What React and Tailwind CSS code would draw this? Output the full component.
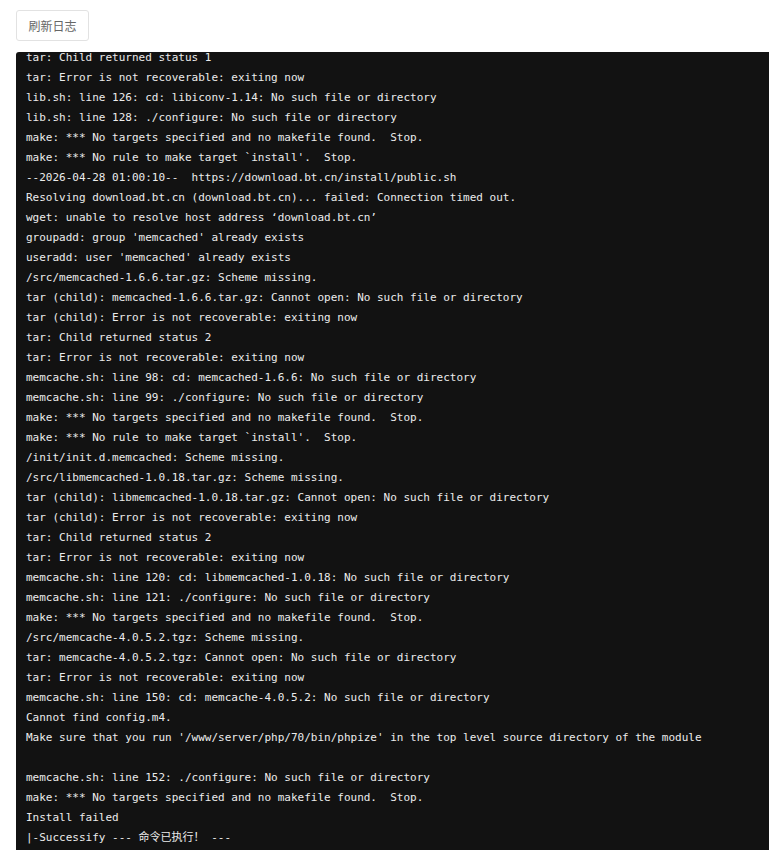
import React from "react";

const lines = [
  "tar: Child returned status 1",
  "tar: Error is not recoverable: exiting now",
  "lib.sh: line 126: cd: libiconv-1.14: No such file or directory",
  "lib.sh: line 128: ./configure: No such file or directory",
  "make: *** No targets specified and no makefile found.  Stop.",
  "make: *** No rule to make target `install'.  Stop.",
  "--2026-04-28 01:00:10--  https://download.bt.cn/install/public.sh",
  "Resolving download.bt.cn (download.bt.cn)... failed: Connection timed out.",
  "wget: unable to resolve host address \u2018download.bt.cn\u2019",
  "groupadd: group 'memcached' already exists",
  "useradd: user 'memcached' already exists",
  "/src/memcached-1.6.6.tar.gz: Scheme missing.",
  "tar (child): memcached-1.6.6.tar.gz: Cannot open: No such file or directory",
  "tar (child): Error is not recoverable: exiting now",
  "tar: Child returned status 2",
  "tar: Error is not recoverable: exiting now",
  "memcache.sh: line 98: cd: memcached-1.6.6: No such file or directory",
  "memcache.sh: line 99: ./configure: No such file or directory",
  "make: *** No targets specified and no makefile found.  Stop.",
  "make: *** No rule to make target `install'.  Stop.",
  "/init/init.d.memcached: Scheme missing.",
  "/src/libmemcached-1.0.18.tar.gz: Scheme missing.",
  "tar (child): libmemcached-1.0.18.tar.gz: Cannot open: No such file or directory",
  "tar (child): Error is not recoverable: exiting now",
  "tar: Child returned status 2",
  "tar: Error is not recoverable: exiting now",
  "memcache.sh: line 120: cd: libmemcached-1.0.18: No such file or directory",
  "memcache.sh: line 121: ./configure: No such file or directory",
  "make: *** No targets specified and no makefile found.  Stop.",
  "/src/memcache-4.0.5.2.tgz: Scheme missing.",
  "tar: memcache-4.0.5.2.tgz: Cannot open: No such file or directory",
  "tar: Error is not recoverable: exiting now",
  "memcache.sh: line 150: cd: memcache-4.0.5.2: No such file or directory",
  "Cannot find config.m4.",
  "Make sure that you run '/www/server/php/70/bin/phpize' in the top level source directory of the module",
  "",
  "memcache.sh: line 152: ./configure: No such file or directory",
  "make: *** No targets specified and no makefile found.  Stop.",
  "Install failed",
  "|-Successify --- \u547d\u4ee4\u5df2\u6267\u884c\uff01 ---",
];

export default function App() {
  return (
    <div className="h-[850px] w-[769px] overflow-hidden bg-white">
      <div className="pl-4 pt-[10px]">
        <button
          className="h-[31px] w-[73px] rounded-[3px] border border-[#e2e2e2] bg-white text-[12px] text-[#666] font-['Noto_Sans_CJK_SC','Microsoft_YaHei',sans-serif]"
        >
          刷新日志
        </button>
      </div>
      <div className="ml-4 mt-[11px] h-[798px] overflow-hidden rounded-tl-[3px] bg-[#121212] pl-[10px]">
        <div className="-mt-[4px] font-['DejaVu_Sans_Mono','Noto_Sans_CJK_SC',monospace] text-[11px] leading-[20px] text-[#ececec] whitespace-pre">
          {lines.map((l, i) => (
            <div key={i} className="h-[20px]">
              {l}
            </div>
          ))}
        </div>
      </div>
    </div>
  );
}
